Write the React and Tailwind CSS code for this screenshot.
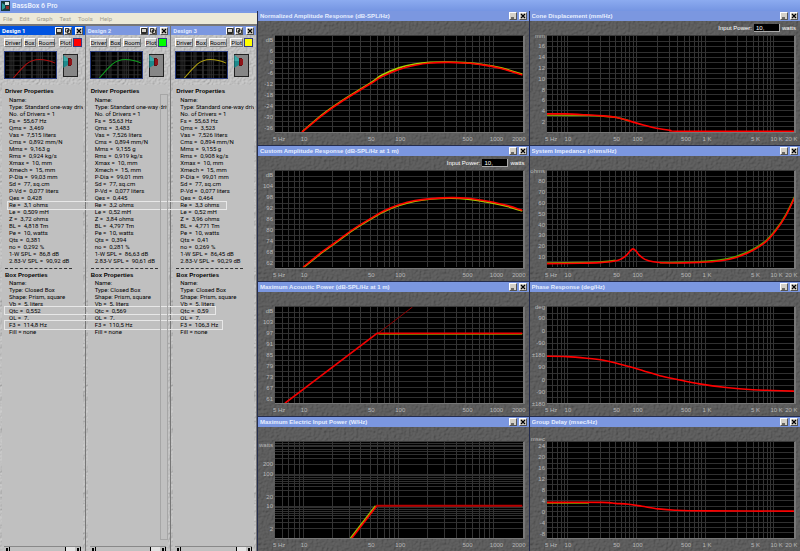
import React, { useId } from "react";

function Grain({ light }) {
  const id = useId();
  return (
    <svg className={`pointer-events-none absolute inset-0 h-full w-full ${light ? "opacity-70" : "opacity-40"}`} aria-hidden="true">
      <filter id={id} x="0" y="0" width="100%" height="100%">
        <feTurbulence type="fractalNoise" baseFrequency={light ? "0.5" : "0.4"} numOctaves="2" seed="4" />
        <feDiffuseLighting surfaceScale={light ? "1.2" : "1.6"} lightingColor={light ? "#d8d8d8" : "#7c7c7c"}>
          <feDistantLight azimuth="225" elevation={light ? "55" : "48"} />
        </feDiffuseLighting>
      </filter>
      <rect width="100%" height="100%" filter={`url(#${id})`} />
    </svg>
  );
}

/* ---------- curves ---------- */

function smooth(points) {
  let d = `M${points[0][0]} ${points[0][1]}`;
  for (let i = 0; i < points.length - 1; i++) {
    const p0 = points[i - 1] || points[i];
    const p1 = points[i];
    const p2 = points[i + 1];
    const p3 = points[i + 2] || p2;
    d += ` C${p1[0] + (p2[0] - p0[0]) / 6} ${p1[1] + (p2[1] - p0[1]) / 6} ${p2[0] - (p3[0] - p1[0]) / 6} ${p2[1] - (p3[1] - p1[1]) / 6} ${p2[0]} ${p2[1]}`;
  }
  return d;
}

const straight = (points) => "M" + points.map((p) => p.join(" ")).join(" L");

const range = (n) => Array.from({ length: n }, (_, i) => i);

function decades(min, max) {
  const out = [];
  for (let d = 1; d < max; d *= 10)
    for (let k = 1; k < 10; k++) if (k * d > min && k * d < max) out.push(k * d);
  return out;
}

const logPct = (v, min, max) => (Math.log(v / min) / Math.log(max / min)) * 100;

const LOW = { max: 2000, ticks: [[10, "10"], [50, "50"], [100, "100"], [500, "500"], [1000, "1000"]], end: "2000" };
const WIDE = { max: 20000, ticks: [[10, "10"], [50, "50"], [100, "100"], [500, "500"], [1000, "1 K"], [5000, "5 K"], [10000, "10 K"]], end: "20 K" };

const every = (labels, first, step) => labels.map((t, i) => [first + i * step, t]);
const lines18 = range(17).map((i) => ((i + 1) / 18) * 100);

const CHARTS = [
  {
    title: "Normalized Amplitude Response (dB-SPL/Hz)",
    axis: LOW,
    box: "56 80 749 296",
    rows: lines18,
    labels: every(["dB", "6", "0", "-6", "-12", "-18", "-24", "-30", "-36"], 5.56, 11.11),
    curves: [
      { c: "#a8d000", dy: -2, p: [[139, 376], [200, 323], [260, 280], [345, 226], [380, 202], [431, 180], [480, 168], [525, 163], [580, 162], [630, 164], [680, 169], [740, 180], [805, 200]] },
      { c: "#ff0000", p: [[137, 376], [200, 323], [260, 280], [345, 227], [380, 205], [431, 183], [480, 170], [525, 163], [580, 161], [630, 163], [680, 168], [740, 180], [805, 200]] },
    ],
  },
  {
    title: "Cone Displacement (mm/Hz)",
    axis: WIDE,
    power: true,
    box: "60 80 746 294",
    rows: lines18,
    labels: [[1, "mm"], ...every(["16", "14", "12", "10", "8", "6", "4", "2"], 11.11, 11.11)],
    curves: [
      { c: "#7f9a00", p: [[60, 322], [180, 323], [230, 325], [270, 329], [310, 340]] },
      { c: "#ff0000", p: [[60, 318], [115, 318], [180, 321], [230, 324], [270, 329], [310, 340], [350, 352], [390, 362], [430, 368], [470, 371], [806, 371]] },
    ],
  },
  {
    title: "Custom Amplitude Response (dB-SPL/Hz at 1 m)",
    axis: LOW,
    power: true,
    box: "56 80 749 293",
    rows: lines18,
    labels: every(["dB", "104", "98", "92", "86", "80", "74", "68", "62"], 5.56, 11.11),
    curves: [
      { c: "#a8c800", dy: 2, p: [[141, 373], [200, 325], [231, 303], [289, 260], [345, 225], [385, 202], [431, 183], [480, 170], [530, 163], [590, 161], [640, 164], [700, 173], [760, 186], [805, 200]] },
      { c: "#ff0000", p: [[141, 373], [200, 325], [231, 303], [289, 260], [345, 225], [385, 202], [431, 183], [480, 170], [530, 164], [590, 161], [640, 163], [700, 172], [760, 185], [805, 200]] },
    ],
  },
  {
    title: "System Impedance (ohms/Hz)",
    axis: WIDE,
    box: "60 80 746 294",
    rows: lines18,
    labels: [[1, "ohms"], ...every(["80", "70", "60", "50", "40", "30", "20", "10"], 11.11, 11.11)],
    curves: [
      { c: "#70b000", dy: -2, p: [[60, 363], [160, 362], [220, 360], [265, 355]] },
      { c: "#50b000", dy: -3, p: [[400, 363], [460, 362], [520, 360], [580, 355], [630, 344], [680, 323], [720, 296], [750, 262], [780, 216], [806, 162]] },
      { c: "#ff0000", p: [[60, 363], [160, 362], [220, 360], [265, 355], [285, 348], [300, 337], [310, 325], [319, 318], [328, 324], [338, 337], [355, 350], [380, 357], [430, 361], [520, 359], [580, 355], [630, 344], [680, 323], [720, 296], [750, 262], [780, 216], [806, 162]] },
    ],
  },
  {
    title: "Maximum Acoustic Power (dB-SPL/Hz at 1 m)",
    axis: LOW,
    box: "58 78 747 293",
    rows: lines18,
    labels: every(["dB", "103", "97", "91", "85", "79", "73", "67", "61"], 5.56, 11.11),
    curves: [
      { c: "#900000", w: 1, line: true, p: [[368, 159], [473, 78]] },
      { c: "#a08c00", w: 1, line: true, p: [[370, 161], [805, 161]] },
      { c: "#f00000", line: true, p: [[88, 371], [366, 158], [805, 158]] },
    ],
  },
  {
    title: "Phase Response (deg/Hz)",
    axis: WIDE,
    box: "60 78 746 293",
    rows: range(15).map((i) => ((i + 1) / 16) * 100),
    labels: [[1, "deg"], ...every(["90", "0", "-90", "±180", "90", "0", "-90", "±180"], 12.5, 12.5)],
    curves: [
      { c: "#ff0000", p: [[60, 228], [120, 229], [180, 234], [230, 240], [270, 249], [310, 260], [350, 272], [400, 287], [450, 298], [520, 312], [600, 323], [680, 330], [740, 332], [806, 334]] },
    ],
  },
  {
    title: "Maximum Electric Input Power (W/Hz)",
    axis: LOW,
    box: "60 82 748 293",
    rows: decades(1, 1000).map((v) => 100 - logPct(v, 1, 1000)),
    labels: [[4, "watts"], [23.3, "200"], [33.3, "100"], [56.6, "20"], [66.6, "10"], [90, "2"]],
    curves: [
      { c: "#90d000", line: true, p: [[288, 375], [364, 276]] },
      { c: "#ff0000", line: true, p: [[292, 375], [368, 276]] },
      { c: "#b80000", w: 2, line: true, p: [[366, 276], [808, 276]] },
    ],
  },
  {
    title: "Group Delay (msec/Hz)",
    axis: WIDE,
    box: "64 80 746 295",
    rows: lines18,
    labels: [[-2, "msec"], ...every(["24", "20", "16", "12", "8", "4", "0", "-4", "-8"], 5.56, 11.11)],
    curves: [
      { c: "#90a000", dy: 2, p: [[64, 265], [190, 265]] },
      { c: "#ff0000", p: [[64, 265], [230, 265], [270, 268], [310, 271], [350, 277], [400, 285], [450, 289], [545, 291], [810, 292]] },
    ],
  },
];

/* ---------- graph windows ---------- */

function WinButton({ label, children }) {
  return (
    <button aria-label={label} className="h-2 w-2 shrink-0 border border-t-white border-r-[#555] border-b-[#555] border-l-white bg-[#d4d0c8]">
      <svg viewBox="0 0 6 6" className="block h-full w-full" fill="none" stroke="#000">
        {children}
      </svg>
    </button>
  );
}

function Chart({ chart, index }) {
  const { axis } = chart;
  const xs = decades(5, axis.max);
  return (
    <section className="relative flex min-h-0 min-w-0 flex-col overflow-hidden bg-[#545454]">
      <Grain />
      <header className="relative flex h-[10px] shrink-0 items-center gap-[2px] bg-[#7b97e0] pr-[2px] pl-[2px]">
        <h2 className="min-w-0 flex-1 truncate text-[6px] leading-[10px] font-bold text-[#e6eeff]">{chart.title}</h2>
        <WinButton label="Minimize"><path d="M1 5H4" /></WinButton>
        <WinButton label="Close"><path d="M1 1L5 5M5 1L1 5" strokeWidth="1.2" /></WinButton>
      </header>
      <div className="relative flex h-[14px] shrink-0 items-center justify-end gap-[2px] pr-1 text-[6px] leading-[8px] text-white">
        {chart.power && (
          <>
            <label htmlFor={`power-${index}`}>Input Power:</label>
            <input id={`power-${index}`} defaultValue="10," className="h-2 w-[26px] border-r border-b border-[#aaa] bg-black px-[2px] text-[6px] leading-[7px] text-white outline-none" />
            <span>watts</span>
          </>
        )}
      </div>
      <div className="relative flex min-h-0 flex-1 pr-1">
        <svg className="h-full w-[17px] shrink-0 overflow-visible text-[6px]" fill="#b8b8b8" textAnchor="end">
          {chart.labels.map(([y, t], i) => (
            <text key={i} x="15" y={`${y}%`} dy="2">{t}</text>
          ))}
        </svg>
        <div className="min-h-0 min-w-0 flex-1 border-t border-r-2 border-b border-t-[#3a3a3a] border-r-[#777] border-b-[#777] bg-black">
          <svg className="block h-full w-full" shapeRendering="crispEdges">
            {chart.rows.map((y, i) => (
              <line key={`r${i}`} x1="0" x2="100%" y1={`${y}%`} y2={`${y}%`} stroke="#303030" />
            ))}
            {xs.map((v) => (
              <line key={v} x1={`${logPct(v, 5, axis.max)}%`} x2={`${logPct(v, 5, axis.max)}%`} y1="0" y2="100%" stroke="#343434" />
            ))}
            <svg viewBox={chart.box} preserveAspectRatio="none" width="100%" height="100%" shapeRendering="auto">
              {chart.curves.map((k, i) => (
                <path
                  key={i}
                  d={k.line ? straight(k.p) : smooth(k.p)}
                  transform={k.dy ? `translate(0 ${k.dy})` : undefined}
                  fill="none"
                  stroke={k.c}
                  strokeWidth={k.w || 1.6}
                  vectorEffect="non-scaling-stroke"
                />
              ))}
            </svg>
          </svg>
        </div>
      </div>
      <div className="relative h-3 shrink-0 pr-[3px] pl-[17px]">
        <svg className="block h-full w-full overflow-visible text-[6px]" fill="#b8b8b8">
          <text x="-2" y="8">5 Hz</text>
          {axis.ticks.map(([v, t]) => (
            <text key={t} x={`${logPct(v, 5, axis.max)}%`} y="8" textAnchor="middle">{t}</text>
          ))}
          <text x="100%" y="8" textAnchor="end">{axis.end}</text>
        </svg>
      </div>
    </section>
  );
}

/* ---------- design columns ---------- */

const DESIGNS = [
  {
    name: "Design 1", swatch: "bg-[#ff0000]", bar: "bg-[#0053e1]", text: "text-white", trace: "#b01010",
    v: ["55,67", "3,469", "7,515", "0,892", "9,163", "0,924", "99,03", "0,428", "3,1", "0,509", "3,72", "4,818", "0,381", "0,292", "86,8", "90,92", "0,552", "114,8"],
  },
  {
    name: "Design 2", swatch: "bg-[#00ff00]", bar: "bg-[#7b97e0]", text: "text-[#dfe8ff]", trace: "#10a020",
    v: ["55,63", "3,483", "7,526", "0,894", "9,155", "0,919", "99,01", "0,445", "3,2", "0,52", "3,84", "4,797", "0,394", "0,281", "86,63", "90,61", "0,569", "110,5"],
  },
  {
    name: "Design 3", swatch: "bg-[#ffff00]", bar: "bg-[#7b97e0]", text: "text-[#dfe8ff]", trace: "#b0a010",
    v: ["55,63", "3,523", "7,526", "0,894", "9,155", "0,908", "99,01", "0,464", "3,3", "0,52", "3,96", "4,771", "0,41", "0,269", "86,45", "90,29", "0,59", "106,3"],
  },
];

const driverLines = (v) => [
  "Name:", "Type: Standard one-way driv", "No. of Drivers = 1",
  `Fs =  ${v[0]} Hz`, `Qms =  ${v[1]}`, `Vas =  ${v[2]} liters`, `Cms =  ${v[3]} mm/N`, `Mms =  ${v[4]} g`, `Rms =  ${v[5]} kg/s`,
  "Xmax =  10, mm", "Xmech =  15, mm", `P-Dia =  ${v[6]} mm`, "Sd =  77, sq.cm", "P-Vd =  0,077 liters",
  `Qes =  ${v[7]}`, `Re =  ${v[8]} ohms`, `Le =  ${v[9]} mH`, `Z =  ${v[10]} ohms`, `BL =  ${v[11]} Tm`, "Pe =  10, watts",
  `Qts =  ${v[12]}`, `no =  ${v[13]} %`, `1-W SPL =  ${v[14]} dB`, `2.83-V SPL =  ${v[15]} dB`,
];

const boxLines = (v) => [
  "Name:", "Type: Closed Box", "Shape: Prism, square", "Vb =  5, liters", `Qtc =  ${v[16]}`, "QL =  7,", `F3 =  ${v[17]} Hz`, "Fill = none",
];

function ToolButton({ children }) {
  return (
    <button className="h-[9px] shrink-0 border border-t-white border-r-[#777] border-b-[#777] border-l-white bg-[#c9c9c9] text-[6px] leading-[7px] text-black">
      {children}
    </button>
  );
}

function MiniGraph({ color }) {
  return (
    <svg viewBox="0 0 53 28" className="h-7 w-[53px] shrink-0 border border-[#2c3f80] bg-black" aria-label="Response preview">
      <g stroke="#333">
        {[4, 6, 8, 15, 18, 20, 27, 28, 33, 35, 37, 39, 45, 49].map((x) => <path key={x} d={`M${x}.5 0V28`} />)}
        {[4, 9, 14, 19, 24].map((y) => <path key={y} d={`M0 ${y}.5H53`} strokeWidth=".8" />)}
      </g>
      <path d="M8 28L16 19L22 13Q28 8 36 8Q45 8 53 12" fill="none" stroke={color} strokeWidth="1.1" />
    </svg>
  );
}

function Speaker() {
  return (
    <svg viewBox="0 0 15 23" className="h-[23px] w-[15px] shrink-0" aria-hidden="true">
      <rect x=".5" y=".5" width="14" height="22" fill="#868686" stroke="#222" />
      <path d="M0 1L5 5V11L0 14Z" fill="#1d8a8c" />
      <path d="M0 1L5 5V7H0Z" fill="#3aa9a8" />
      <path d="M5 4H8V12H5Z" fill="#5c0c10" />
      <path d="M6 5H9V11H6Z" fill="#8f1418" />
      <path d="M0 1V15" stroke="#111" strokeWidth=".6" />
    </svg>
  );
}

function Design({ d }) {
  return (
    <section className="relative flex min-h-0 min-w-0 flex-col overflow-hidden bg-[#b8b8b8]">
      <Grain light />
      <header className={`relative flex h-[9px] shrink-0 items-center gap-px pr-[2px] pl-[2px] ${d.bar}`}>
        <h2 className={`flex-1 text-[6px] leading-[9px] font-bold ${d.text}`}>{d.name}</h2>
        <WinButton label="Save"><path d="M.5 .5H5.5V5.5H.5ZM1 4.5H5" strokeWidth=".8" /></WinButton>
        <WinButton label="Copy"><path d="M.5 .5H3.5V4H.5ZM2.5 2H5.5V5.5H2.5Z" strokeWidth=".7" /></WinButton>
        <span className="w-px" />
        <WinButton label="Close"><path d="M1 1L5 5M5 1L1 5" strokeWidth="1.2" /></WinButton>
      </header>
      <div className="relative mt-[3px] flex h-[9px] shrink-0 items-center pr-[3px] pl-1">
        <div className="flex flex-1 gap-[2px]">
          <ToolButton>Driver</ToolButton>
          <ToolButton>Box</ToolButton>
          <ToolButton>Room</ToolButton>
        </div>
        <ToolButton>Plot</ToolButton>
        <button aria-label="Plot colour" className={`ml-px h-[9px] w-[9px] shrink-0 border border-[#333b80] ${d.swatch}`} />
      </div>
      <div className="relative mt-1 flex shrink-0 items-center gap-[6px] pl-1">
        <MiniGraph color={d.trace} />
        <Speaker />
      </div>
      <div className="relative mx-[2px] mt-[6px] min-h-0 flex-1 overflow-hidden bg-[#c0c0c0] pt-[3px] pl-[3px] text-[6px] leading-[7px] whitespace-pre text-black">
        <h3 className="mb-px font-['Liberation_Sans',Arial,sans-serif] font-bold">Driver Properties</h3>
        <ul className="pl-1">
          {driverLines(d.v).map((t) => <li key={t}>{t}</li>)}
        </ul>
        <div className="mt-[4px] mb-[3px] w-[67px] border-t border-dashed border-[#333]" />
        <h3 className="font-['Liberation_Sans',Arial,sans-serif] font-bold">Box Properties</h3>
        <ul className="pl-1">
          {boxLines(d.v).map((t) => <li key={t}>{t}</li>)}
        </ul>
      </div>
      <div className="relative mx-1 flex h-[5px] shrink-0 border-t border-[#888] bg-[#e2e2e2]">
        <span className="w-[6px] border-r border-black bg-[#c0c0c0]"><i className="mt-px ml-[2px] block h-[3px] w-[2px] bg-black" /></span>
        <span className="mr-[9px] flex-1 border-r border-black bg-[#c0c0c0]" />
        <span className="w-[6px] border-r border-black bg-[#c0c0c0]"><i className="mt-px ml-[2px] block h-[3px] w-[2px] bg-black" /></span>
      </div>
    </section>
  );
}

export default function App() {
  return (
    <div className="flex h-screen flex-col overflow-hidden bg-[#7b9ae6] font-['Liberation_Sans',Arial,sans-serif]">
      <header className="flex h-[11px] shrink-0 items-center gap-[2px] bg-gradient-to-b from-[#8cabf0] to-[#7595e2] pt-px pl-px">
        <svg viewBox="0 0 9 10" className="h-[10px] w-[9px]" aria-hidden="true">
          <rect width="9" height="10" fill="#17383c" />
          <path d="M1 2L4 4V7L1 9Z" fill="#2b9a94" />
          <path d="M4 1H8V4H4Z" fill="#d8e4e4" />
          <path d="M5 5H8V8H5Z" fill="#8f2a2a" />
        </svg>
        <h1 className="font-[Roboto,sans-serif] text-[7px] leading-[10px] font-medium text-[#f0f5ff]">BassBox 6 Pro</h1>
      </header>
      <main className="flex min-h-0 flex-1">
        <div className="relative flex w-[257px] shrink-0 flex-col font-[Roboto,Arial,sans-serif]">
          <nav className="mt-[2px] flex h-[11px] shrink-0 items-center gap-[7px] bg-[#ece9d8] pl-[3px] text-[6px] leading-[8px] text-[#a09c8c]">
            {["File", "Edit", "Graph", "Test", "Tools", "Help"].map((m) => <button key={m}>{m}</button>)}
          </nav>
          <div className="grid min-h-0 flex-1 grid-cols-3 gap-px bg-[#777] pt-[2px] pr-px">
            {DESIGNS.map((d) => <Design key={d.name} d={d} />)}
          </div>
          <div className="pointer-events-none absolute top-[190px] left-[7px] h-[9px] w-[220px] border border-[#e8e8e8]" />
          <div className="pointer-events-none absolute top-[295px] left-1 h-[9px] w-[212px] border border-[#e8e8e8]" />
          <div className="pointer-events-none absolute top-[309px] left-1 h-[10px] w-[219px] border border-[#e8e8e8]" />
          <div className="pointer-events-none absolute top-[83px] bottom-[11px] left-[160px] w-2 border border-[#a6a6a6]" />
        </div>
        <div className="grid min-w-0 flex-1 grid-cols-2 grid-rows-4 gap-px bg-[#242c4c] pl-px">
          {CHARTS.map((c, i) => <Chart key={c.title} chart={c} index={i} />)}
        </div>
      </main>
    </div>
  );
}
